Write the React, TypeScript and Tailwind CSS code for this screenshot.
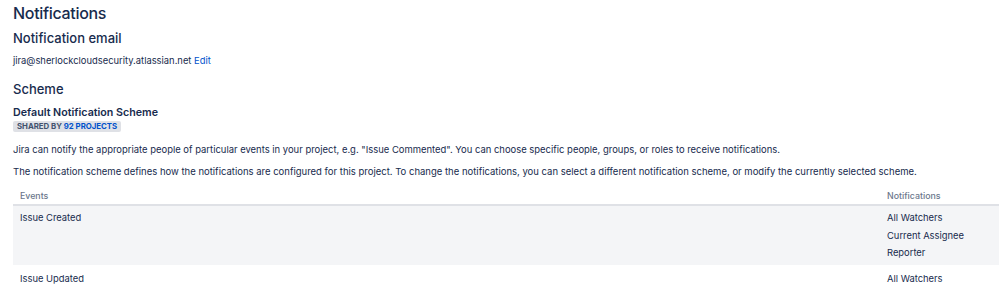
export default function App() {
  const rows = [
    { event: "Issue Created", notifications: ["All Watchers", "Current Assignee", "Reporter"] },
    { event: "Issue Updated", notifications: ["All Watchers"] },
  ];

  return (
    <div className="bg-white text-[#172B4D] pl-[13px] pt-[3px] h-[291px] overflow-hidden" style={{ fontFamily: "Inter, 'Noto Sans', sans-serif" }}>
      <h1 className="text-[16px] leading-[20px] font-medium tracking-[-0.02em]">Notifications</h1>
      <h2 className="text-[13px] leading-[18px] font-medium mt-[6px]">Notification email</h2>
      <p className="text-[9.4px] leading-[14px] mt-[7px]">
        jira@sherlockcloudsecurity.atlassian.net <a className="text-[#0052CC]">Edit</a>
      </p>
      <h2 className="text-[13px] leading-[18px] font-medium mt-[12px]">Scheme</h2>
      <h3 className="text-[10.7px] leading-[14px] font-semibold mt-[8px]">Default Notification Scheme</h3>
      <div className="mt-[1px] flex">
        <span className="bg-[#DFE1E6] text-[#42526E] text-[7.8px] leading-[11px] font-bold uppercase rounded-[2px] px-[4px]">
          Shared by <span className="text-[#0052CC]">92 projects</span>
        </span>
      </div>
      <p className="text-[9.45px] leading-[14px] mt-[11px]">
        Jira can notify the appropriate people of particular events in your project, e.g. "Issue Commented". You can choose specific people, groups, or roles to receive notifications.
      </p>
      <p className="text-[9.5px] leading-[14px] mt-[8px]">
        The notification scheme defines how the notifications are configured for this project. To change the notifications, you can select a different notification scheme, or modify the currently selected scheme.
      </p>
      <table className="w-full mt-[8px] border-collapse text-[9.4px]">
        <thead>
          <tr className="border-b-2 border-[#DFE1E6] text-[#6B778C] text-[8.8px] text-left">
            <th className="font-medium leading-[12px] pt-[3px] pb-[2px] pl-[7px]">Events</th>
            <th className="font-medium leading-[12px] pt-[3px] pb-[2px] w-[112px]">Notifications</th>
          </tr>
        </thead>
        <tbody>
          {rows.map((r, i) => (
            <tr key={r.event} className={i % 2 === 0 ? "bg-[#F4F5F7] align-top" : "align-top"}>
              <td className={`pl-[7px] pb-[3px] leading-[17.5px] ${i === 0 ? "pt-[3px]" : "pt-[5px]"}`}>{r.event}</td>
              <td className={`pb-[3px] leading-[17.5px] ${i === 0 ? "pt-[3px]" : "pt-[5px]"}`}>
                {r.notifications.map((n) => (
                  <div key={n}>{n}</div>
                ))}
              </td>
            </tr>
          ))}
        </tbody>
      </table>
    </div>
  );
}
